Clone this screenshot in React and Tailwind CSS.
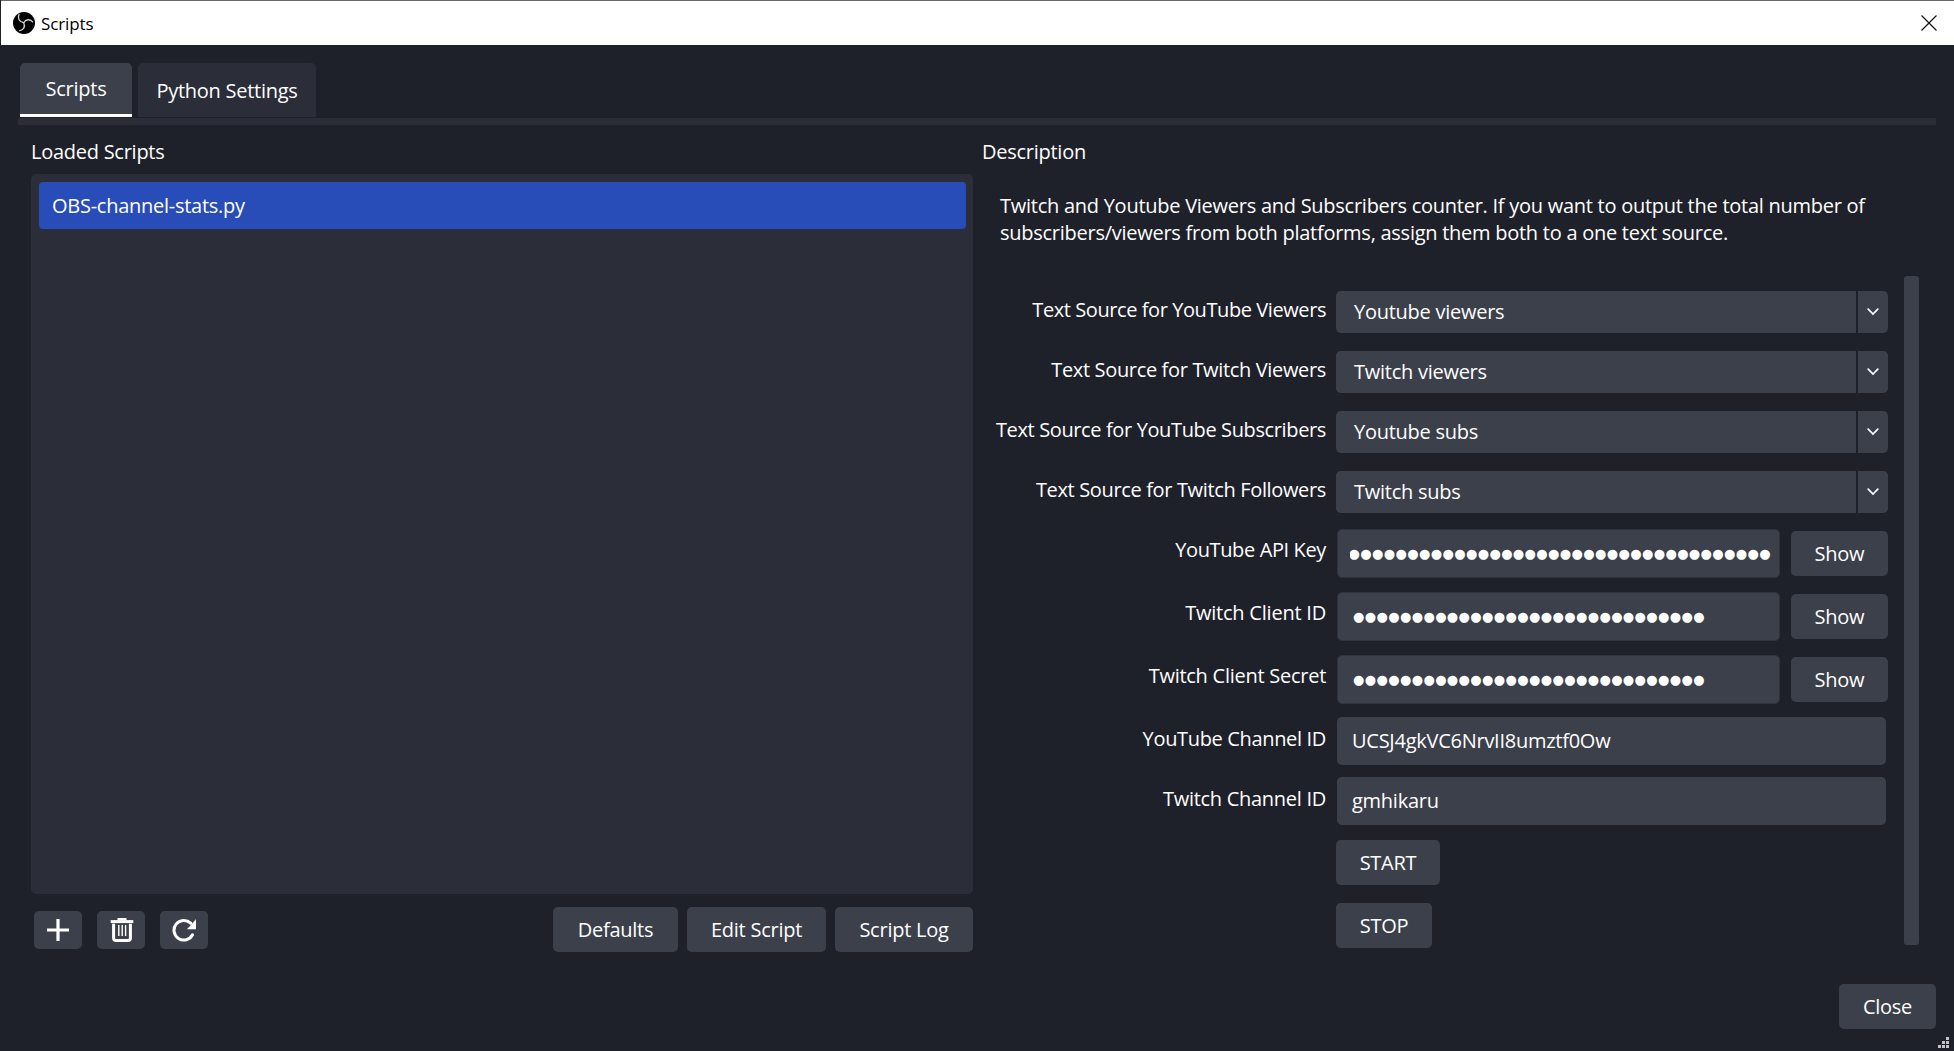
const combos = [
  { label: 'Text Source for YouTube Viewers', tracking: 'tracking-[-0.420px]', value: 'Youtube viewers' },
  { label: 'Text Source for Twitch Viewers', tracking: 'tracking-[-0.340px]', value: 'Twitch viewers' },
  { label: 'Text Source for YouTube Subscribers', tracking: 'tracking-[-0.370px]', value: 'Youtube subs' },
  { label: 'Text Source for Twitch Followers', tracking: 'tracking-[-0.350px]', value: 'Twitch subs' },
];

const secrets = [
  { label: 'YouTube API Key', tracking: 'tracking-[-0.370px]', count: 36, scrolled: true },
  { label: 'Twitch Client ID', tracking: 'tracking-[-0.220px]', count: 30, scrolled: false },
  { label: 'Twitch Client Secret', tracking: 'tracking-[-0.260px]', count: 30, scrolled: false },
];

const channels = [
  { label: 'YouTube Channel ID', tracking: 'tracking-[-0.340px]', value: 'UCSJ4gkVC6NrvII8umztf0Ow' },
  { label: 'Twitch Channel ID', tracking: 'tracking-[-0.280px]', value: 'gmhikaru' },
];

function Button({ children, className = '' }) {
  return (
    <button
      className={`flex h-[45px] shrink-0 items-center justify-center rounded-[5px] bg-[#3c404b] tracking-[-0.250px] whitespace-nowrap ${className}`}
    >
      {children}
    </button>
  );
}

function Label({ children, className }) {
  return (
    <div className={`w-[344px] shrink-0 text-right leading-7 whitespace-nowrap ${className}`}>
      {children}
    </div>
  );
}

function ObsLogo() {
  return (
    <svg viewBox="0 0 22 22" className="h-[22px] w-[22px]">
      <circle cx="11" cy="11" r="11" fill="#000" />
      <g fill="none" stroke="#d4d4d4" strokeWidth="1.3" strokeLinecap="round">
        <path d="M6 2.4C4.3 6.300 6.300 10 10.700 10.700" />
        <path d="M10.700 10.700C12.600 7.200 17.300 6.600 19.700 10" />
        <path d="M10.700 10.700C12.600 14.500 10.500 18.300 6.700 18.600" />
      </g>
    </svg>
  );
}

function IconButton({ children }) {
  return (
    <button className="flex h-[38px] w-12 items-center justify-center rounded-[5px] bg-[#3c404b]">
      {children}
    </button>
  );
}

export default function App() {
  return (
    <div className="relative flex h-[1051px] w-[1954px] flex-col overflow-hidden border-l border-[#1f212a] bg-[#1f212a] font-['Open_Sans',sans-serif] text-[20px] tracking-[-0.260px] text-white">
      <header className="flex h-[45px] shrink-0 items-center border-t border-[#6b6b6b] bg-white pr-[17px] pb-px pl-3 text-black">
        <ObsLogo />
        <span className="ml-[6px] pt-[3px] text-[17px] leading-6 tracking-[-0.100px]">Scripts</span>
        <svg viewBox="0 0 16 16" className="ml-auto h-4 w-4">
          <path d="M.5 .5l15 15M15.500 .5l-15 15" stroke="#111" strokeWidth="1.200" />
        </svg>
      </header>

      <nav className="mt-[18px] ml-[19px] flex h-[54px] shrink-0 gap-[6px]">
        <div className="flex w-[112px] items-center justify-center rounded-t-[5px] border-b-[3px] border-white bg-[#3c404b]">
          Scripts
        </div>
        <div className="flex w-[178px] items-center justify-center rounded-t-[5px] bg-[#2b2d38] pt-[2px]">
          Python Settings
        </div>
      </nav>
      <div className="mt-px ml-[17px] h-[7px] w-[1918px] shrink-0 bg-[#2b2d38]" />

      <main className="ml-[30px] flex h-[830px] shrink-0">
        <section className="w-[942px] shrink-0">
          <h2 className="mt-[13px] leading-7">Loaded Scripts</h2>
          <div className="mt-2 h-[720px] rounded-[5px] bg-[#2b2d38] py-2 pr-[7px] pl-2">
            <div className="flex h-[47px] items-center rounded-[4px] bg-[#284cb8] pl-[13px]">
              OBS-channel-stats.py
            </div>
          </div>
          <div className="mt-[13px] flex">
            <div className="mt-1 ml-[3px] flex gap-[15px]">
              <IconButton>
                <svg viewBox="0 0 22 22" className="h-[22px] w-[22px]">
                  <path d="M11 0v22M0 11h22" stroke="#fff" strokeWidth="3.200" />
                </svg>
              </IconButton>
              <IconButton>
                <svg viewBox="0 0 24 24" className="ml-[2px] h-6 w-6" fill="none" stroke="#fff">
                  <path d="M.7 3.600h22.600" strokeWidth="3" />
                  <path d="M7.500 1.200h9" strokeWidth="2.400" />
                  <path d="M3.600 5.800v14.200q0 2.500 2.500 2.500h11.800q2.500 0 2.500-2.500V5.800" strokeWidth="3" />
                  <path d="M8.800 7v11M12.200 7v11M15.600 7v11" strokeWidth="1.400" />
                </svg>
              </IconButton>
              <IconButton>
                <svg viewBox="0 0 24 24" className="h-6 w-6">
                  <path
                    d="M20.500 16.800A9.800 9.800 0 1 1 18.600 5.200"
                    fill="none"
                    stroke="#fff"
                    strokeWidth="3"
                    strokeLinecap="round"
                  />
                  <path d="M24 1.500v9.500h-8.500z" fill="#fff" stroke="#fff" strokeWidth="0.500" strokeLinejoin="round" />
                </svg>
              </IconButton>
            </div>
            <div className="ml-auto flex gap-[9px]">
              <Button className="w-[125px]">Defaults</Button>
              <Button className="w-[139px]">Edit Script</Button>
              <Button className="w-[138px]">Script Log</Button>
            </div>
          </div>
        </section>

        <section className="ml-[9px] w-[938px] shrink-0">
          <h2 className="mt-[13px] leading-7">Description</h2>
          <p className="mt-[26px] ml-[18px] leading-[27px] whitespace-nowrap">
            Twitch and Youtube Viewers and Subscribers counter. If you want to output the total number of
            <br />
            subscribers/viewers from both platforms, assign them both to a one text source.
          </p>

          <div className="mt-[30px] flex">
            <div className="mt-[15px] w-[906px]">
              <div className="flex flex-col gap-[18px]">
                {combos.map((c) => (
                  <div key={c.label} className="flex h-[42px]">
                    <Label className={`mt-[5px] ${c.tracking}`}>{c.label}</Label>
                    <div className="ml-[10px] flex flex-1 gap-[2px]">
                      <div className="flex flex-1 items-center rounded-l-[5px] bg-[#3c404b] pl-[18px]">{c.value}</div>
                      <div className="flex w-[30px] items-center justify-center rounded-r-[5px] bg-[#3c404b]">
                        <svg viewBox="0 0 12 8" className="h-2 w-3">
                          <path d="M1.200 1.200L6 6l4.800-4.800" fill="none" stroke="#fff" strokeWidth="1.700" strokeLinecap="round" />
                        </svg>
                      </div>
                    </div>
                  </div>
                ))}
              </div>

              <div className="mt-4 flex flex-col gap-[14px]">
                {secrets.map((s) => (
                  <div key={s.label} className="flex h-[49px]">
                    <Label className={`mt-[7px] ${s.tracking}`}>{s.label}</Label>
                    <div className="ml-[11px] flex w-[443px] items-center rounded-[5px] border border-[#30333d] bg-[#3c404b] pl-3">
                      <div
                        className={`flex w-[421px] overflow-hidden font-['DejaVu_Sans',sans-serif] text-[13px] leading-6 tracking-[0.390px] whitespace-nowrap ${s.scrolled ? 'justify-end' : 'pl-[3px]'}`}
                      >
                        {'●'.repeat(s.count)}
                      </div>
                    </div>
                    <Button className="mt-[2px] ml-[11px] w-[97px]">Show</Button>
                  </div>
                ))}
              </div>

              <div className="mt-[13px] flex flex-col gap-3">
                {channels.map((c) => (
                  <div key={c.label} className="flex h-12">
                    <Label className={`mt-2 ${c.tracking}`}>{c.label}</Label>
                    <div className="ml-[11px] flex w-[549px] items-center rounded-[5px] bg-[#3c404b] pl-[15px]">
                      {c.value}
                    </div>
                  </div>
                ))}
              </div>

              <div className="mt-[15px] ml-[354px] flex flex-col gap-[18px]">
                <Button className="w-[104px]">START</Button>
                <Button className="w-[96px]">STOP</Button>
              </div>
            </div>
            <div className="ml-4 h-[669px] w-[15px] shrink-0 rounded-[3px] bg-[#3c404b]" />
          </div>
        </section>
      </main>

      <footer className="mt-[29px] flex shrink-0 justify-end pr-[18px]">
        <Button className="w-[97px]">Close</Button>
      </footer>

      <svg viewBox="0 0 11 11" className="absolute right-[5px] bottom-[3px] h-[11px] w-[11px]" fill="#c4c4c4">
        <path d="M8 0h3v3H8zM4 4h3v3H4zM8 4h3v3H8zM0 8h3v3H0zM4 8h3v3H4zM8 8h3v3H8z" />
      </svg>
    </div>
  );
}
